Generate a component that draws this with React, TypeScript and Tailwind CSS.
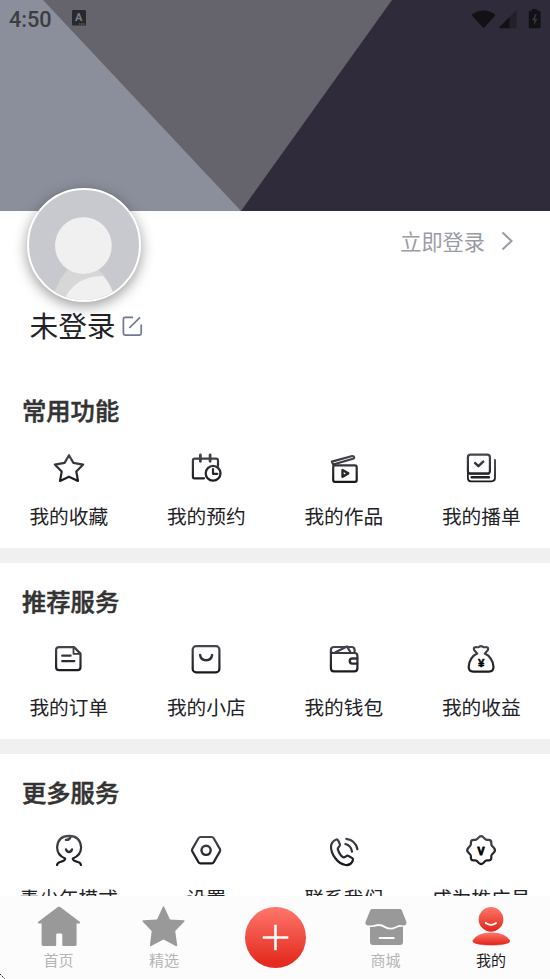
import type { ReactNode } from 'react'

type Item = { label: string; icon: ReactNode }

const sections: { title: string; items: Item[] }[] = [
  {
    title: '常用功能',
    items: [
      {
        label: '我的收藏',
        icon: <path d="M18 4.2 L22.4 11.9 L32.2 13.6 L25.3 20.6 L27 29.9 L18 25.7 L9 29.9 L10.7 20.6 L3.8 13.6 L13.6 11.9 Z" />,
      },
      {
        label: '我的预约',
        icon: (
          <>
            <path d="M16 27.3 H6.2 Q4.9 27.3 4.9 25.5 V9.5 Q4.9 7.7 6.7 7.7 H28.2 Q30 7.7 30 9.5 V15" />
            <path d="M12.4 4 V10.3 M22.1 4 V10.3" strokeWidth="2.8" />
            <circle cx="25.1" cy="22.3" r="7.4" strokeWidth="2.3" />
            <path d="M25 18 V22.8 H29.3" />
          </>
        ),
      },
      {
        label: '我的作品',
        icon: (
          <>
            <rect x="7.2" y="14.3" width="23.5" height="16.5" rx="1.8" />
            <path d="M5.9 10.6 L26.2 5 Q27.9 4.8 28.1 6.6 L27.8 7.5 L7.2 13.5 Z" />
            <path d="M16.5 19 V25.7 L22.3 22.4 Z" strokeWidth="2.4" />
          </>
        ),
      },
      {
        label: '我的播单',
        icon: (
          <>
            <rect x="4.9" y="3.7" width="22" height="18.8" rx="2.6" />
            <path d="M4.9 20 V27 Q4.9 30.3 8 30.3 H28.4 Q32 30.3 32 26.6 V8.8" strokeWidth="1.8" />
            <path d="M7 22.6 H25.5 M8.6 26.3 H26" strokeWidth="2.4" />
            <path d="M12.2 12.2 L15.4 15.2 L20.2 10.7" strokeWidth="2.5" />
          </>
        ),
      },
    ],
  },
  {
    title: '推荐服务',
    items: [
      {
        label: '我的订单',
        icon: (
          <>
            <path d="M23 5.1 H8 Q5.1 5.1 5.1 8 V25.2 Q5.1 28.1 8 28.1 H26.5 Q29.5 28.1 29.5 25.2 V11.6 Z" />
            <path d="M22.5 5.4 V11.8 H29.1" strokeWidth="1.8" />
            <path d="M11.2 13.7 H19.6 M11.2 19.1 H23.3" />
          </>
        ),
      },
      {
        label: '我的小店',
        icon: (
          <>
            <rect x="4.7" y="4.2" width="26.7" height="26.1" rx="3.4" />
            <path d="M12.1 13 Q12.8 18.2 18.1 18.2 Q23.4 18.2 24.1 13" strokeWidth="2.4" />
          </>
        ),
      },
      {
        label: '我的钱包',
        icon: (
          <>
            <path d="M4.9 9 V26.2 Q4.9 29.3 8 29.3 H28.2 Q31.4 29.3 31.4 26.2 V14 Q31.4 11 28.6 11 H7.3 Q4.9 11 4.9 8.4 V7.8 Q4.9 5 8 5 H25.8 Q28.4 5 28.6 7.6 V10.5" />
            <path d="M9.5 10.2 L20.9 4.4 L24.5 10.3" />
            <path d="M31.2 16.5 H26.2 Q23.8 16.5 23.8 19 Q23.8 21.6 26.2 21.6 H31.2" strokeWidth="2.4" />
          </>
        ),
      },
      {
        label: '我的收益',
        icon: (
          <>
            <path d="M14.2 11.6 L11.2 8.1 Q10 5.3 13 5 Q15 5.6 16 4.8 Q18 3.5 20 4.8 Q21 5.6 23 5 Q26 5.3 24.8 8.1 L21.8 11.6 Q25.2 13.2 27.6 16.4 Q30.5 20.6 30.5 25 Q30.5 29.6 25.9 29.6 H10.3 Q5.7 29.6 5.7 25 Q5.7 20.6 8.4 16.4 Q10.8 13.2 14.2 11.6 Z" />
            <text x="18.1" y="25.3" textAnchor="middle" className="fill-black stroke-black font-['Liberation_Sans'] text-[11.5px] font-bold" strokeWidth="0.5">¥</text>
          </>
        ),
      },
    ],
  },
  {
    title: '更多服务',
    items: [
      {
        label: '青少年模式',
        icon: (
          <>
            <path d="M6 32 Q6.5 29.6 9.2 29 Q14.2 28 14.2 25.6 Q6.1 22.2 6.1 14.3 Q6.8 3 18 2.8 Q29.4 3 30.1 14.3 Q30.1 22.2 21.8 25.6 Q21.8 28 26.8 29 Q29.5 29.6 30 32" />
            <path d="M15 16.4 Q15.8 19 18 19 Q20.3 19 21 16.4" strokeWidth="2.4" />
            <path d="M19.6 3.5 Q19 7 14.9 6.9" strokeWidth="2.4" />
          </>
        ),
      },
      {
        label: '设置',
        icon: (
          <>
            <path d="M12.6 4 H23.6 Q25 4 25.7 5.2 L31.9 16 Q32.6 17.2 31.9 18.4 L25.7 29.2 Q25 30.4 23.6 30.4 H12.6 Q11.2 30.4 10.5 29.2 L4.3 18.4 Q3.6 17.2 4.3 16 L10.5 5.2 Q11.2 4 12.6 4 Z" />
            <circle cx="18.1" cy="17.3" r="4.6" strokeWidth="2.4" />
          </>
        ),
      },
      {
        label: '联系我们',
        icon: (
          <>
            <path d="M9.8 6.7 Q11.3 6 12.2 7.5 L13.8 11 Q14.3 12.2 13.4 13.2 Q11.6 15 11.8 16.3 Q13.6 22 17.4 24.4 Q18.8 24.6 20 23.3 Q21.2 22.3 22.6 23 L26.3 25.1 Q27.5 26 26.8 27.5 Q25 32.4 19.6 32 Q13.5 31 9.2 25 Q4.9 19.3 5 13.2 Q5.8 8.3 9.8 6.7 Z" />
            <path d="M19.3 11 Q25.2 12.4 26 18.6" />
            <path d="M20.3 5.8 Q29.7 7.3 31.4 16.2" />
          </>
        ),
      },
      {
        label: '成为推广员',
        icon: (
          <>
            <path d="M15.9 4.2 Q18.1 2 20.3 4.2 L22.3 6.1 Q23.1 6.8 24.1 6.8 H25.7 Q28.3 6.8 28.3 9.4 V11 Q28.3 12 29 12.8 L31 14.9 Q33 17.1 31 19.3 L29 21.4 Q28.3 22.2 28.3 23.2 V24.7 Q28.3 27.3 25.7 27.3 H24.1 Q23.1 27.3 22.3 28 L20.3 30 Q18.1 32 15.9 30 L13.9 28 Q13.1 27.3 12.1 27.3 H10.5 Q7.9 27.3 7.9 24.7 V23.2 Q7.9 22.2 7.2 21.4 L5.2 19.3 Q3.2 17.1 5.2 14.9 L7.2 12.8 Q7.9 12 7.9 11 V9.4 Q7.9 6.8 10.5 6.8 H12.1 Q13.1 6.8 13.9 6.1 Z" />
            <text x="18.1" y="21.8" textAnchor="middle" className="fill-black stroke-black font-['Liberation_Sans'] text-[10.5px] font-bold" strokeWidth="0.9">V</text>
          </>
        ),
      },
    ],
  },
]

function Header() {
  return (
    <header className="relative h-[211px] bg-[#2f2b3a]">
      <svg className="absolute inset-0" width="550" height="211">
        <path d="M0 0 H392 L241 211 H0 Z" fill="#65646d" />
        <path d="M0 0 H43 L241 211 H0 Z" fill="#8b8f9b" />
      </svg>
      <div className="relative flex h-[38px] items-center justify-between pr-[8px] pl-[9px]">
        <div className="flex items-center gap-[20px]">
          <span className="w-[43px] pt-[2px] font-['Roboto'] text-[21.7px] leading-none font-medium text-[#3b3d42]">4:50</span>
          <svg width="14" height="16" viewBox="0 0 14 16" className="mb-px">
            <rect width="14" height="15.6" rx="1.2" fill="#29292d" />
            <text x="6.8" y="11.3" textAnchor="middle" className="fill-[#7c7b84] font-['Roboto'] text-[11px] font-bold">A</text>
            <path d="M7 14 H13" stroke="#77767f" strokeWidth="0.9" strokeDasharray="1.4 0.5" />
          </svg>
        </div>
        <svg width="70" height="22" viewBox="0 0 70 22" fill="#121116" className="mt-px">
          <path d="M0.3 5.2 Q11.5 -2.4 22.8 5.2 Q23.6 6 23 6.8 L12.4 18.6 Q11.6 19.4 10.8 18.6 L0.3 6.8 Q-0.4 6 0.3 5.2 Z" />
          <path d="M44.6 2 V19.3 H28 Q26.8 18.8 27.8 17.8 L43.6 2 Q44.6 1 44.6 2 Z" fill="#232029" />
          <path d="M37.4 8.2 V19.3 H28 Q26.8 18.8 27.8 17.8 Z" />
          <path d="M60 0 H65 V1.8 H67.4 Q68.6 1.8 68.6 3 V18.1 Q68.6 19.3 67.4 19.3 H58 Q56.8 19.3 56.8 18.1 V3 Q56.8 1.8 58 1.8 H60 Z" />
          <path d="M63.5 5 L60 11.2 H62.2 L61.8 16.6 L65.4 9.7 H63 L64.8 5 Z" fill="#37343f" />
        </svg>
      </div>
    </header>
  )
}

function Profile() {
  return (
    <div className="h-[161px]">
      <div className="flex items-start justify-between pr-[36px] pl-[27px]">
        <div className="relative -mt-[23px] h-[114px] w-[114px] overflow-hidden rounded-full border-2 border-white bg-[#c8c9cf] shadow-[0_4px_14px_rgba(0,0,0,0.4)]">
          <svg width="110" height="110" viewBox="2 2 110 110">
            <path d="M24 114 Q31 90 43 80 H69 Q83 90 89 114 Z" fill="#d7d7d7" />
            <path d="M36 114 Q47 88 76 88 Q85 97 89 114 Z" fill="#f0f0f0" />
            <circle cx="56.4" cy="57.6" r="28.4" fill="#f0f0f0" />
          </svg>
        </div>
        <button className="flex h-[60px] items-center gap-[16px] text-[21.2px] text-[#9a9ba6]">
          立即登录
          <svg width="13" height="20" fill="none" stroke="currentColor" strokeWidth="2">
            <path d="M1.5 1.5 L10.5 10 L1.5 18.5" />
          </svg>
        </button>
      </div>
      <div className="mt-[4px] flex h-[38px] items-center gap-[6px] pl-[29.5px] text-[28.7px] leading-none text-[#222226]">
        未登录
        <svg width="21" height="21" fill="none" stroke="#6f7896" strokeWidth="1.7" className="mt-[3px]">
          <path d="M11 1.4 H3 Q1.4 1.4 1.4 3 V17.6 Q1.4 19.2 3 19.2 H17.6 Q19.2 19.2 19.2 17.6 V8.5" />
          <path d="M7.3 12 L18 1.3" />
        </svg>
      </div>
    </div>
  )
}

function NavItem({ label, active, children }: { label: string; active?: boolean; children: ReactNode }) {
  return (
    <div className={active ? 'flex flex-col items-center text-[#1c1c1e]' : 'flex flex-col items-center text-[#b5b5b5]'}>
      <svg width="44" height="42" viewBox="0 0 44 42" className="mt-[9px]" fill="#999999">
        {children}
      </svg>
      <span className="mt-[2px] text-[15px] leading-[22px]">{label}</span>
    </div>
  )
}

export default function App() {
  return (
    <div className="flex h-[979px] w-[550px] flex-col overflow-hidden bg-white font-['Noto_Sans_CJK_SC',sans-serif]">
      <main className="min-h-0 flex-1 overflow-hidden">
        <Header />
        <Profile />
        {sections.map((section) => (
          <section key={section.title} className="h-[191px] border-b-[15px] border-[#f0f0f0]">
            <h2 className="h-[79px] pt-[20px] pl-[22px] text-[24.3px] leading-[36px] font-medium text-[#333333] [-webkit-text-stroke:0.5px_#333333]">{section.title}</h2>
            <div className="grid grid-cols-4">
              {section.items.map((item) => (
                <div key={item.label} className="flex flex-col items-center">
                  <svg width="36" height="36" viewBox="0 0 36 36" fill="none" stroke="url(#ink)" strokeWidth="2.2" strokeLinecap="round" strokeLinejoin="round">
                    <defs>
                      <linearGradient id="ink" gradientUnits="userSpaceOnUse" x1="0" y1="3" x2="0" y2="32">
                        <stop stopColor="#484750" />
                        <stop offset="1" stopColor="#17161a" />
                      </linearGradient>
                    </defs>
                    {item.icon}
                  </svg>
                  <span className="mt-[14px] text-[19.7px] leading-[30px] whitespace-nowrap text-[#222226]">{item.label}</span>
                </div>
              ))}
            </div>
          </section>
        ))}
      </main>
      <nav className="relative grid h-[83px] shrink-0 grid-cols-[117px_94px_128px_93px_118px] bg-[#fcfcfc]">
        <NavItem label="首页">
          <path d="M22 1.7 Q22.6 1.5 23.2 2 L43 17 Q43.7 18.5 42.2 18.4 H39.6 V39.6 Q39.6 41 38.2 41 H26.4 Q25.3 41 25.3 39.9 V29.6 Q25.3 28.4 24.1 28.4 H20.4 Q19.2 28.4 19.2 29.6 V39.9 Q19.2 41 18.1 41 H6 Q4.6 41 4.6 39.6 V18.4 H1.8 Q0.3 18.5 1 17 L20.8 2 Q21.4 1.5 22 1.7 Z" />
        </NavItem>
        <NavItem label="精选">
          <path d="M20.9 1.8 Q21.5 0.8 22.1 1.8 L28 14.6 L41.8 15.2 Q43.2 15.6 42.2 16.7 L33.2 26 L35.2 40.3 Q35 41.6 33.8 40.9 L21.5 34.4 L9.2 40.9 Q8 41.6 7.9 40.3 L9.7 26 L0.8 16.7 Q-0.2 15.6 1.2 15.2 L15 14.6 Z" />
        </NavItem>
        <div className="flex justify-center pt-[11px]">
          <svg width="61" height="61" viewBox="0 0 61 61">
            <defs>
              <linearGradient id="red" x1="0" y1="0" x2="0" y2="1">
                <stop stopColor="#ff776c" />
                <stop offset="0.9" stopColor="#e42c20" />
              </linearGradient>
            </defs>
            <circle cx="30.5" cy="30.5" r="30.5" fill="url(#red)" />
            <path d="M30.5 17.7 V43.3 M17.7 30.5 H43.3" stroke="#fff" strokeWidth="2.6" />
          </svg>
        </div>
        <NavItem label="商城">
          <path d="M8.2 4 H36 Q37.3 4 37.8 5.3 L42.4 16.8 Q43 20.3 39.4 20.5 Q35 19.4 32.2 21.3 Q27.5 24 22 21.4 Q17 18.2 12.5 19.2 Q8.5 20.7 4 20.4 Q0.7 20 1.6 16.8 L6.3 5.3 Q6.8 4 8.2 4 Z" />
          <path d="M6 22 Q10 22.2 13 21.2 Q16.5 20.3 20.6 23 Q26.5 26 32.2 23 Q35 21.4 39 21.8 V37 Q39 40 36 40 H9 Q6 40 6 37 Z" />
          <path d="M15.5 33 H29.8" stroke="#fff" strokeWidth="1.8" strokeLinecap="round" />
        </NavItem>
        <NavItem label="我的" active>
          <circle cx="22" cy="14.4" r="12.3" fill="url(#red)" />
          <ellipse cx="22.5" cy="36" rx="18" ry="5" fill="#f8b5b0" />
          <path d="M22.3 27.4 Q37 27.6 41 35.6 Q41.8 40 22.3 40 Q2.8 40 3.6 35.6 Q7.6 27.6 22.3 27.4 Z" fill="url(#red)" />
          <path d="M16.7 18 Q22 21.8 27.2 18" fill="none" stroke="#fff" strokeWidth="1.8" strokeLinecap="round" />
        </NavItem>
        <svg className="absolute bottom-0 left-0" width="5" height="5">
          <path d="M0 0 L4.5 4.5" stroke="#111" strokeWidth="1" strokeDasharray="1.5 1" />
        </svg>
      </nav>
    </div>
  )
}
